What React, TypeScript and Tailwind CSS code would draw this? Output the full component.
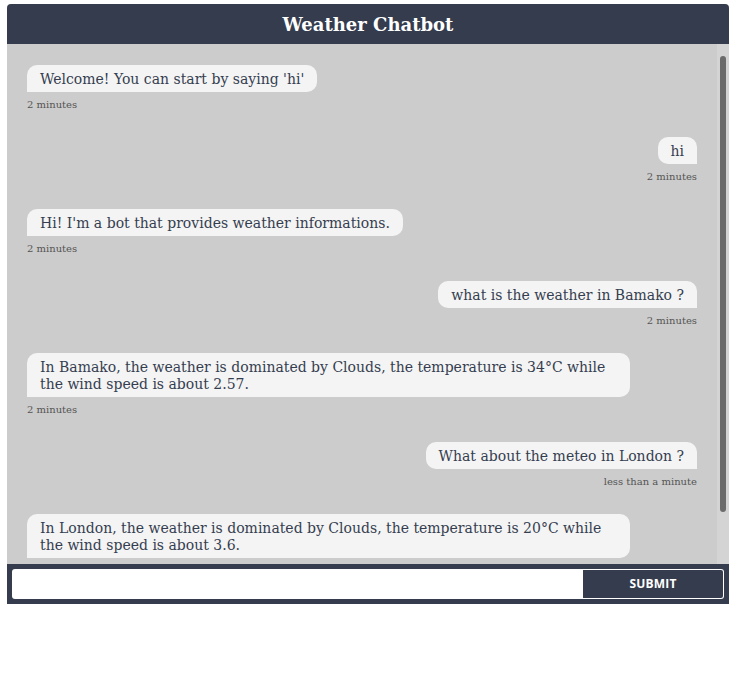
import React from "react";

type Msg = { from: "bot" | "user"; text: string; time: string };

const messages: Msg[] = [
	{ from: "bot", text: "Welcome! You can start by saying 'hi'", time: "2 minutes" },
	{ from: "user", text: "hi", time: "2 minutes" },
	{ from: "bot", text: "Hi! I'm a bot that provides weather informations.", time: "2 minutes" },
	{ from: "user", text: "what is the weather in Bamako ?", time: "2 minutes" },
	{
		from: "bot",
		text: "In Bamako, the weather is dominated by Clouds, the temperature is 34°C while the wind speed is about 2.57.",
		time: "2 minutes",
	},
	{ from: "user", text: "What about the meteo in London ?", time: "less than a minute" },
	{
		from: "bot",
		text: "In London, the weather is dominated by Clouds, the temperature is 20°C while the wind speed is about 3.6.",
		time: "less than a minute",
	},
];

function Bubble({ msg }: { msg: Msg }) {
	const bot = msg.from === "bot";
	return (
		<div className={`flex flex-col mb-[26px] ${bot ? "items-start" : "items-end"}`}>
			<div
				className={`max-w-[90%] bg-[#f4f4f4] text-[#353e50] text-[14px] leading-[17px] px-[13px] pt-[6px] pb-[4px] rounded-[10px] ${
					bot ? "rounded-bl-none" : "rounded-br-none"
				}`}
			>
				{msg.text}
			</div>
			<div className="mt-[7px] text-[10px] leading-[12px] text-[#555]">{msg.time}</div>
		</div>
	);
}

export default function App() {
	return (
		<div className="pt-[4px] pl-[7px] font-['DejaVu_Serif',serif]">
			<div className="w-[722px] h-[600px] flex flex-col">
				{/* header */}
				<div className="h-[40px] shrink-0 bg-[#343c4e] rounded-t-[4px] flex items-center justify-center">
					<h1 className="text-white text-[18px] font-bold">Weather Chatbot</h1>
				</div>

				{/* messages + scrollbar */}
				<div className="h-[520px] shrink-0 bg-[#cccccc] flex">
					<div className="flex-1 overflow-hidden px-[20px] pt-[21px]">
						{messages.map((m, i) => (
							<Bubble key={i} msg={m} />
						))}
					</div>
					<div className="w-[12px] shrink-0 bg-[#d4d4d4] flex justify-center pt-[12px]">
						<div className="w-[6px] h-[456px] rounded-full bg-[#6b6b6b]" />
					</div>
				</div>

				{/* input */}
				<form
					className="h-[40px] shrink-0 bg-[#343c4e] flex p-[5px]"
					onSubmit={(e) => e.preventDefault()}
				>
					<input
						autoFocus
						className="flex-1 h-[30px] bg-white rounded-l-[3px] px-[6px] text-[14px] text-[#353e50] outline-none"
					/>
					<button
						type="submit"
						className="w-[141px] h-[30px] bg-[#343c4e] border border-l-0 border-white rounded-r-[3px] text-white text-[12px] font-bold font-['Open_Sans',sans-serif] tracking-[0.2px]"
					>
						SUBMIT
					</button>
				</form>
			</div>
		</div>
	);
}
